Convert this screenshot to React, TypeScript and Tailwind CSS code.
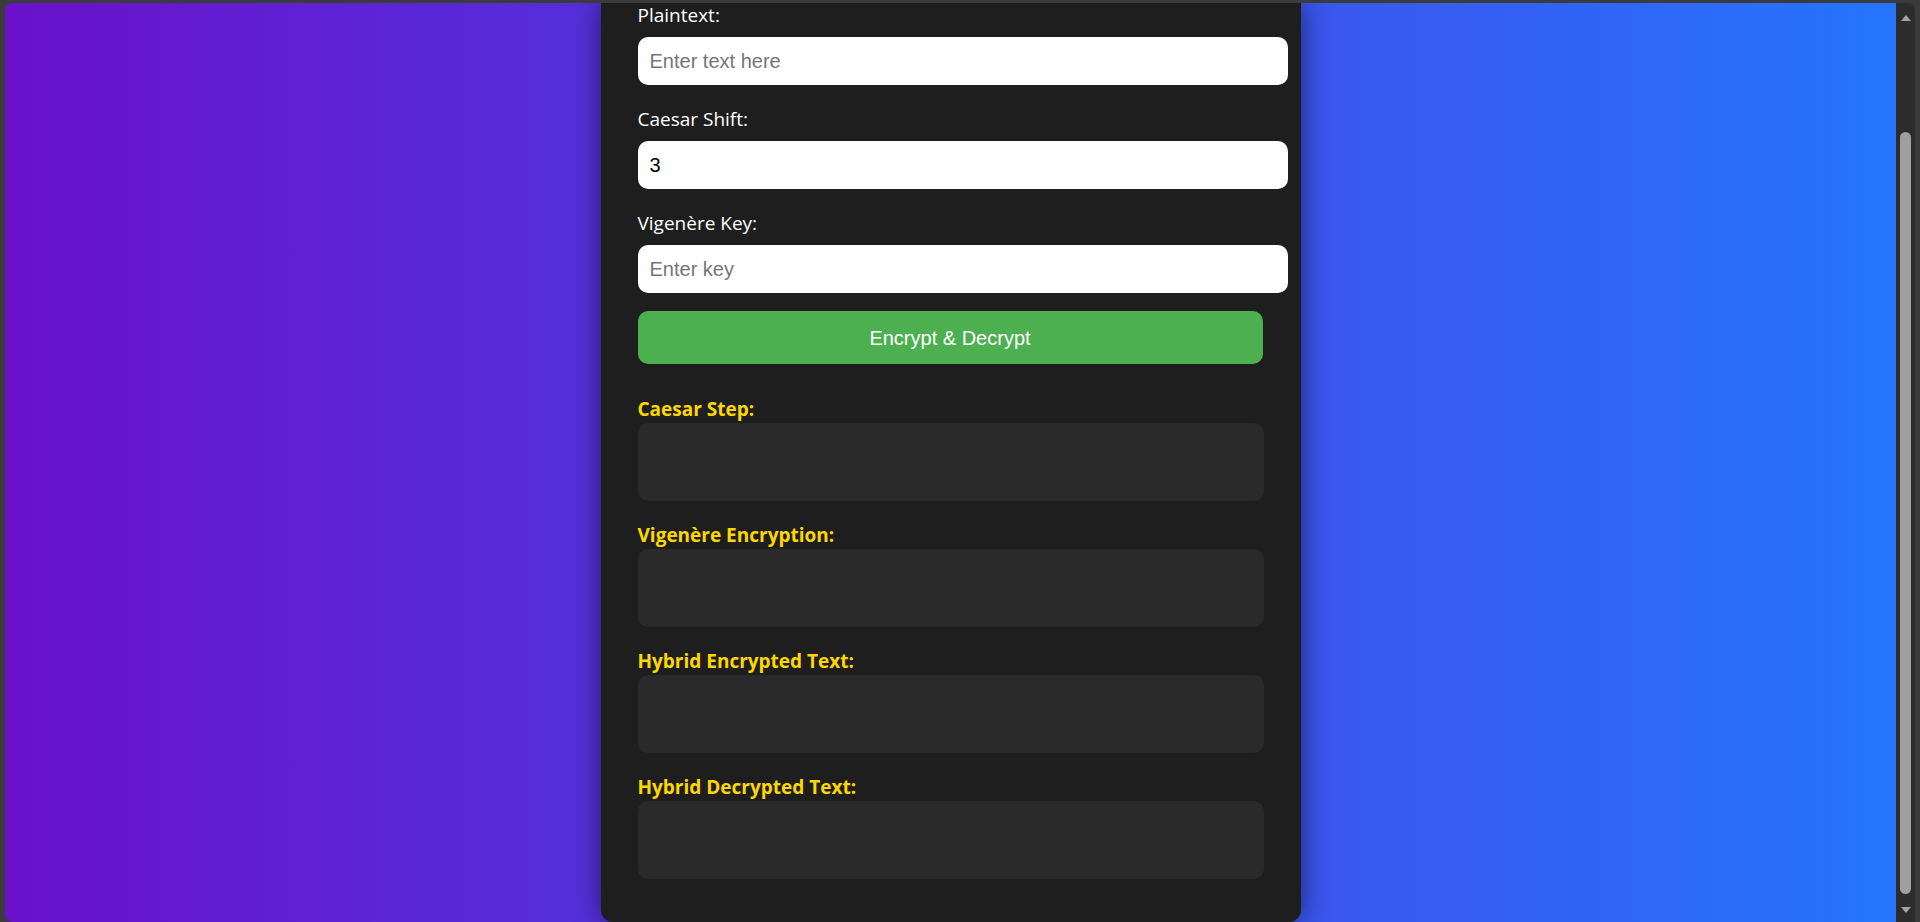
import React from 'react'

const labelFont = { fontFamily: '"Open Sans", "Noto Sans", sans-serif' }

function Field({ label, placeholder, value, first }: { label: string; placeholder?: string; value?: string; first?: boolean }) {
    return (
        <div className={first ? '' : 'mt-[21px]'}>
            <label className="block text-[19px] leading-[27px] text-white" style={labelFont}>{label}</label>
            <input
                type="text"
                readOnly
                defaultValue={value}
                placeholder={placeholder}
                className="mt-[8px] block h-[48px] w-[650px] rounded-[10px] border-0 bg-white px-[12px] text-[20px] text-black placeholder:text-[#757575] outline-none font-['Liberation_Sans',Arial,sans-serif]"
            />
        </div>
    )
}

function Output({ label }: { label: string }) {
    return (
        <div className="mt-[21px] first:mt-0">
            <div className="text-[19px] font-bold leading-[27px] text-[#ffd700]" style={labelFont}>{label}</div>
            <div className="h-[78px] rounded-[10px] bg-[#2a2a2a]"></div>
        </div>
    )
}

export default function App() {
    return (
        <div className="flex h-[922px] w-[1920px] overflow-hidden bg-[#3b3b3b] pt-[3px] pl-[5px]">
            {/* page viewport */}
            <div className="flex flex-1 justify-center overflow-hidden rounded-l-[8px] bg-[linear-gradient(to_right,#6a11cb,#2575fc)]">
                <div className="h-[919px] w-[700px] shrink-0 rounded-b-[12px] bg-[#1e1e1e] px-[37px] pt-[0px] shadow-[0_0_28px_rgba(0,0,0,0.55)]">
                    <div className="-mt-[1px]">
                        <Field label="Plaintext:" placeholder="Enter text here" first />
                        <Field label="Caesar Shift:" value="3" />
                        <Field label="Vigenère Key:" placeholder="Enter key" />
                    </div>

                    <button className="mt-[18px] block h-[53px] w-[625px] rounded-[10px] bg-[#4caf50] text-[20px] text-white font-['Liberation_Sans',Arial,sans-serif]">
                        Encrypt &amp; Decrypt
                    </button>

                    <div className="mt-[32px]">
                        <Output label="Caesar Step:" />
                        <Output label="Vigenère Encryption:" />
                        <Output label="Hybrid Encrypted Text:" />
                        <Output label="Hybrid Decrypted Text:" />
                    </div>
                </div>
            </div>

            {/* scrollbar */}
            <div className="relative h-full w-[19px] shrink-0 rounded-tr-[6px] bg-[#2c2c2c]">
                <div className="absolute left-1/2 top-[12px] h-0 w-0 -translate-x-1/2 border-x-[5px] border-b-[6px] border-x-transparent border-b-[#a3a3a3]"></div>
                <div className="absolute left-[4px] top-[129px] h-[762px] w-[11px] rounded-full bg-[#9f9f9f]"></div>
                <div className="absolute left-1/2 top-[904px] h-0 w-0 -translate-x-1/2 border-x-[5px] border-t-[6px] border-x-transparent border-t-[#a3a3a3]"></div>
            </div>
            <div className="w-[5px] shrink-0"></div>
        </div>
    )
}
